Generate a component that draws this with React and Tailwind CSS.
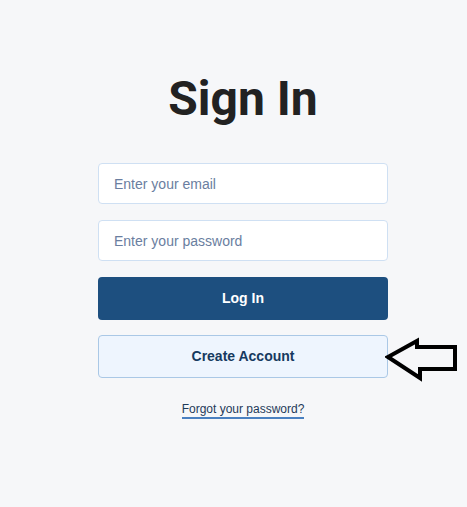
import React, { useState } from 'react';

const SignIn = () => {
  const [email, setEmail] = useState('');
  const [password, setPassword] = useState('');

  return (
    <div className="min-h-[507px] bg-[#f6f7f9] flex flex-col items-center pl-[19px] font-['Liberation_Sans',Arial,sans-serif]">
      <h1 className="mt-[70px] text-[48px] leading-[58px] font-bold text-[#222222] font-['Roboto',sans-serif]">
        Sign In
      </h1>

      <form className="mt-[35px] w-[290px] flex flex-col relative" onSubmit={(e) => e.preventDefault()}>
        <input
          type="email"
          value={email}
          onChange={(e) => setEmail(e.target.value)}
          placeholder="Enter your email"
          className="h-[41px] px-[15px] bg-white border border-[#cfe0f3] rounded-[4px] text-[14px] text-[#333] placeholder:text-[#6a7ea0] outline-none"
        />
        <input
          type="password"
          value={password}
          onChange={(e) => setPassword(e.target.value)}
          placeholder="Enter your password"
          className="mt-[16px] h-[41px] px-[15px] bg-white border border-[#cfe0f3] rounded-[4px] text-[14px] text-[#333] placeholder:text-[#6a7ea0] outline-none"
        />

        <button
          type="submit"
          className="mt-[16px] h-[43px] bg-[#1d4f7f] rounded-[4px] text-white text-[14px] font-bold"
        >
          Log In
        </button>

        <button
          type="button"
          className="mt-[15px] h-[43px] bg-[#eef5fe] border border-[#aac8e6] rounded-[4px] text-[#163a5f] text-[14px] font-bold"
        >
          Create Account
        </button>

        {/* pointer next to the create account button */}
        <svg
          className="absolute left-[287px] top-[174px]"
          width="75"
          height="45"
          viewBox="0 0 75 45"
          fill="none"
        >
          <path
            d="M3 20 L32 4 L32 10 L70 10 L70 32 L35 32 L35 41 Z"
            stroke="#000"
            strokeWidth="4"
            strokeLinejoin="miter"
            fill="none"
          />
        </svg>

        <div className="mt-[18px] text-center">
          <a
            href="#"
            className="text-[12px] text-[#1f3a5a] border-b-2 border-[#4a80c0] pb-[1px]"
          >
            Forgot your password?
          </a>
        </div>
      </form>
    </div>
  );
};

export default function App() {
  return <SignIn />;
}
